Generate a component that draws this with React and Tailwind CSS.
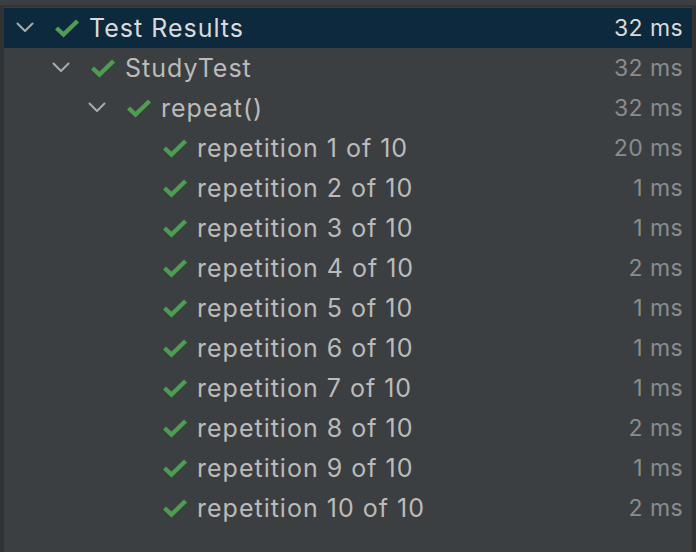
import React from "react";

const rows = [
  { level: 0, label: "Test Results", time: "32 ms", chevron: true, selected: true },
  { level: 1, label: "StudyTest", time: "32 ms", chevron: true },
  { level: 2, label: "repeat()", time: "32 ms", chevron: true },
  { level: 3, label: "repetition 1 of 10", time: "20 ms" },
  { level: 3, label: "repetition 2 of 10", time: "1 ms" },
  { level: 3, label: "repetition 3 of 10", time: "1 ms" },
  { level: 3, label: "repetition 4 of 10", time: "2 ms" },
  { level: 3, label: "repetition 5 of 10", time: "1 ms" },
  { level: 3, label: "repetition 6 of 10", time: "1 ms" },
  { level: 3, label: "repetition 7 of 10", time: "1 ms" },
  { level: 3, label: "repetition 8 of 10", time: "2 ms" },
  { level: 3, label: "repetition 9 of 10", time: "1 ms" },
  { level: 3, label: "repetition 10 of 10", time: "2 ms" },
];

const pads = ["pl-[12px]", "pl-[48px]", "pl-[84px]", "pl-[120px]"];

function Chevron() {
  return (
    <svg width="36" height="20" viewBox="0 0 36 20" className="shrink-0">
      <polyline points="1.5,5.5 9,13 16.5,5.5" fill="none" stroke="#a9abad" strokeWidth="2" strokeLinecap="round" strokeLinejoin="round" />
    </svg>
  );
}

function Check() {
  return (
    <svg width="25" height="20" viewBox="0 0 25 20" className="shrink-0">
      <polyline points="1.5,10 8.5,16.5 22.5,3" fill="none" stroke="#4e9d52" strokeWidth="4.4" strokeLinejoin="miter" />
    </svg>
  );
}

export default function App() {
  return (
    <div
      className="w-[696px] h-[552px] bg-[#3c3f41] flex flex-col overflow-hidden"
      style={{ fontFamily: "Inter, 'Open Sans', sans-serif" }}
    >
      <div className="h-[5px] bg-[#3c3f41] shrink-0" />
      <div className="h-[2px] bg-[#323436] shrink-0" />
      <div className="flex-1 flex border-l-[4px] border-r-[4px] border-[#303234]">
        <div className="flex-1 flex flex-col pt-[1px]">
          {rows.map((r, i) => (
            <div
              key={i}
              className={`h-[40px] flex items-center pr-[9px] ${pads[r.level]} ${r.selected ? "bg-[#0d293e]" : ""}`}
            >
              {r.chevron ? <Chevron /> : <div className="w-[36px] shrink-0" />}
              <div className="ml-[3px]">
                <Check />
              </div>
              <span
                className={`ml-[9px] mt-[1px] text-[25px] leading-none tracking-[1px] ${r.selected ? "text-[#dadada]" : "text-[#bbbbbb]"}`}
              >
                {r.label}
              </span>
              <span
                className={`ml-auto mt-[1px] text-[23px] leading-none tracking-[0.4px] ${r.selected ? "text-[#dadada]" : "text-[#8a8c8e]"}`}
              >
                {r.time}
              </span>
            </div>
          ))}
        </div>
      </div>
    </div>
  );
}
